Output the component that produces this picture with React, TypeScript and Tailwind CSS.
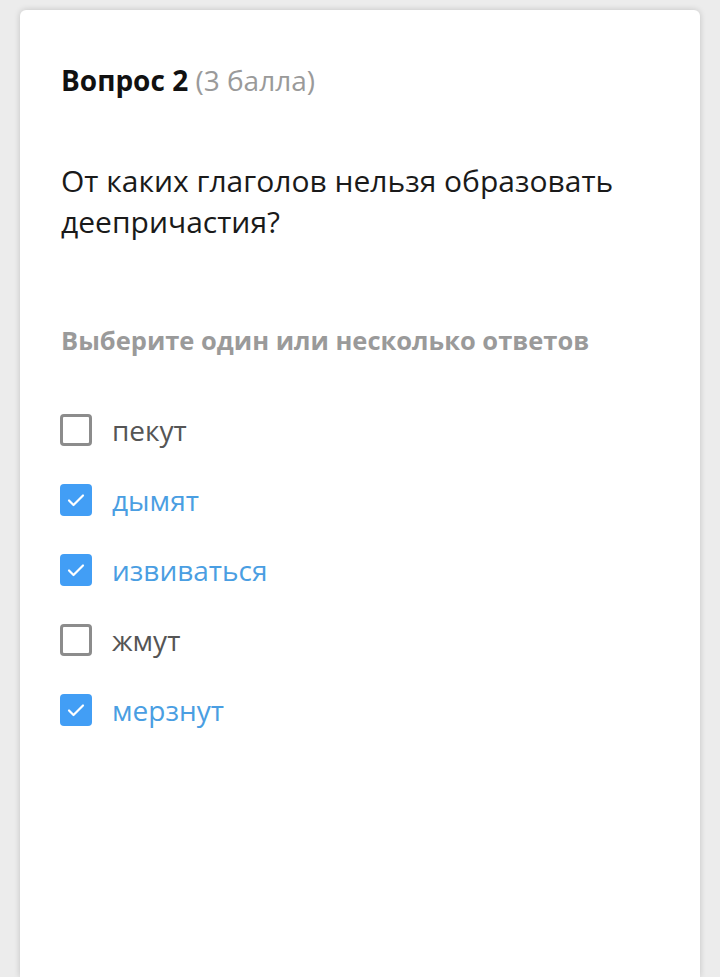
import React from 'react';

const options = [
  { label: 'пекут', checked: false },
  { label: 'дымят', checked: true },
  { label: 'извиваться', checked: true },
  { label: 'жмут', checked: false },
  { label: 'мерзнут', checked: true },
];

const Check = ({ checked }: { checked: boolean }) =>
  checked ? (
    <div className="h-[32px] w-[32px] flex-shrink-0 rounded-[4px] bg-[#429ef5]">
      <svg width="32" height="32" viewBox="0 0 32 32" fill="none" stroke="#fff" strokeWidth="2.2" strokeLinecap="round" strokeLinejoin="round">
        <path d="M9 16.5l4.5 4.5L23 11.5" />
      </svg>
    </div>
  ) : (
    <div className="h-[32px] w-[32px] flex-shrink-0 rounded-[4px] border-[3px] border-[#8c8c8c] bg-white" />
  );

export default function App() {
  return (
    <div className="min-h-[977px] bg-[#ececec] px-[20px] pt-[10px]" style={{ fontFamily: '"Open Sans", "Noto Sans", sans-serif' }}>
      <div className="min-h-[967px] rounded-t-[6px] bg-white pl-[41px] pr-[40px] pt-[50px] shadow-[0_0_6px_rgba(0,0,0,0.18)]">
        <h2 className="text-[28px] leading-[40px] font-bold text-[#111]">
          Вопрос 2 <span className="font-normal text-[#9a9a9a]">(3 балла)</span>
        </h2>

        <p className="mt-[60px] text-[30px] leading-[41px] text-[#1a1a1a]">
          От каких глаголов нельзя образовать деепричастия?
        </p>

        <p className="mt-[80px] text-[25.5px] leading-[36px] font-bold text-[#9a9a9a]">
          Выберите один или несколько ответов
        </p>

        <div className="mt-[52px] flex flex-col gap-[30px]">
          {options.map((o) => (
            <div key={o.label} className="flex h-[40px] items-center gap-[20px] -ml-px">
              <Check checked={o.checked} />
              <span className={`text-[28px] ${o.checked ? 'text-[#4a9ee2]' : 'text-[#555]'}`}>{o.label}</span>
            </div>
          ))}
        </div>
      </div>
    </div>
  );
}
